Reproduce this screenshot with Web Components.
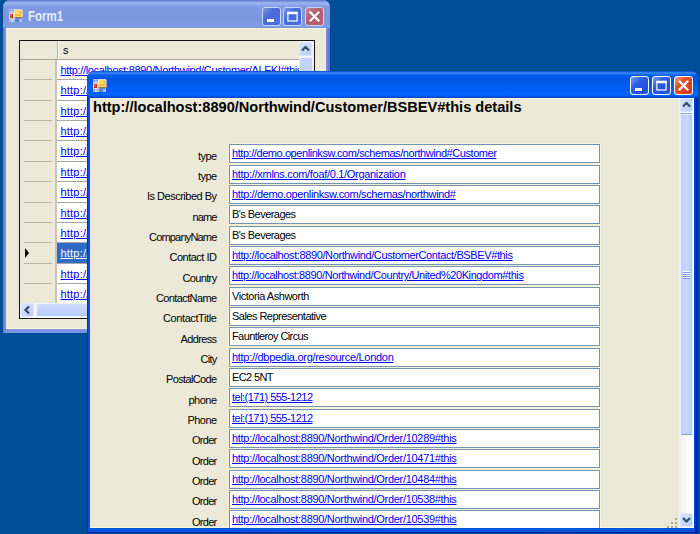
<!DOCTYPE html>
<html lang="en"><head><meta charset="utf-8"><title>Form1</title>
<style>
html,body{margin:0;width:700px;height:534px;overflow:hidden;background:#004e98}
body{font:11px "Liberation Sans",Arial,sans-serif;color:#000}
</style></head><body>
<x-desktop></x-desktop>
<script>
const define=(name,html,setup)=>customElements.define(name,class extends HTMLElement{
  connectedCallback(){
    if(this.shadowRoot)return;
    const t=document.createElement('template');
    t.innerHTML=typeof html==='function'?html(this):html;
    this.attachShadow({mode:'open'}).append(t.content.cloneNode(true));
    if(setup)setup(this,this.shadowRoot);
  }
});

/* Text run fitted to a given width, by tracking or (with the stretch attribute) by horizontal scale. */
define('fit-text',`<style>:host{display:inline-block;white-space:pre;line-height:13px}span{display:inline-block;text-decoration:inherit;transform-origin:0 50%}</style><span></span>`,(el,root)=>{
  const s=root.querySelector('span'),txt=el.getAttribute('text'),w=+el.getAttribute('w');
  s.textContent=txt;
  if(!w)return;
  const n=s.getBoundingClientRect().width;
  if(el.hasAttribute('stretch'))s.style.transform=`scaleX(${w/n})`;
  else s.style.letterSpacing=((w-n)/txt.length)+'px';
});

define('app-icon',`<style>:host{display:block;width:14px;height:14px}svg{display:block}</style>
<svg width="14" height="14" viewBox="0 0 14 14"><rect x=".5" y=".5" width="12" height="12" fill="#5b87d2" stroke="#a9bbdc"/>
<path d="M1 3h4M3 1v12M1 11h12M6 9v4" stroke="#dfe8f7"/><rect x=".5" y="4.500" width="4" height="5" fill="#cf2716" stroke="#f6cfbd"/><rect x="1.500" y="5.500" width="1.500" height="2" fill="#f27757"/>
<rect x="5.500" y="1" width="7.500" height="7" fill="#f5bd2b" stroke="#fff1c5"/><rect x="6.500" y="2" width="4" height="3" fill="#ffdf73"/><path d="M5.500 8.500h8" stroke="#9a7431"/><rect x="6" y="10" width="4" height="3" fill="#5481cf"/><rect x="10.500" y="10" width="2.500" height="3" fill="#a8c2ee"/></svg>`);

define('caption-button',el=>{
  const k=el.getAttribute('kind');
  const g={min:'<path d="M5 13.500h7" stroke="#fff" stroke-width="2.800"/>',
    max:'<rect x="4.900" y="5.500" width="9.200" height="8.500" fill="none" stroke="#fff" stroke-width="1.200"/><path d="M4.300 6h10.400" stroke="#fff" stroke-width="2.600"/>',
    close:'<path d="M4.800 4.800l9.400 9.400M14.200 4.800l-9.400 9.400" stroke="#fff" stroke-width="2.300"/>'}[k];
  return `<style>:host{display:block;box-sizing:border-box;width:19px;height:19px;border:1px solid var(--btn-edge);border-radius:3px;
  background:${k==='close'?'var(--close-bg)':'var(--btn-bg)'}}svg{display:block;margin:-1px}</style><svg width="19" height="19" viewBox="0 0 19 19">${g}</svg>`;
});

define('xp-window',`<style>
:host{position:absolute;box-sizing:border-box;display:flex;flex-direction:column;border-radius:7px 7px 0 0;overflow:hidden;background:var(--frame);padding:0 4px 4px 3px;
 --btn-edge:#fff;--btn-bg:linear-gradient(135deg,#7ba3f5,#2b5fe6 35%,#1d50df 75%,#2a66f0);--close-bg:linear-gradient(135deg,#f0a083,#e2512c 35%,#d9401a 75%,#c93713)}
header{display:flex;align-items:center;box-sizing:border-box;flex:none;margin:0 -4px 0 -3px;background:var(--title);height:var(--th);padding:var(--tp);color:var(--tc)}
.name{flex:1;font:bold 15px "Liberation Sans",sans-serif;padding-left:5px;margin-top:-1px}
nav{display:flex;gap:2.700px}
main{flex:1;min-height:0;background:#ece9d8;display:flex;overflow:hidden;box-shadow:inset 0 1px #fbf6d8,inset 0 -1px #fbf6d8}
</style><header><app-icon></app-icon><div class="name"><slot name="title"></slot></div><nav><caption-button kind="min"></caption-button><caption-button kind="max"></caption-button><caption-button kind="close"></caption-button></nav></header><main><slot></slot></main>`);

const chevrons={up:'M3.500 8.500L7 5l3.500 3.500',down:'M3.500 5L7 8.500 10.500 5',left:'M8.500 3.500L5 7l3.500 3.500'};
define('scroll-arrow',el=>`<style>:host{display:block;flex:none;box-sizing:border-box;width:13px;height:14px;border:1px solid #dce6fd;border-radius:2px;background:linear-gradient(135deg,#d7e3ff,#b9cefb)}svg{display:block;margin:-1px}</style>
<svg width="13" height="14" viewBox="0.500 0 13 14"><path d="${chevrons[el.getAttribute('dir')]}" fill="none" stroke="#33486f" stroke-width="2.200"/></svg>`);

define('detail-row',el=>{
  const link=el.hasAttribute('link');
  return `<style>:host{display:grid;grid-template-columns:126.500px 371px;column-gap:12.500px;height:20.340px;flex:none}
  .label{text-align:right;padding-top:5.500px}
  .field{box-sizing:border-box;height:19px;border:1px solid #7094b2;background:#fff;padding:2px 0 0 2px;box-shadow:0 0 0 1px #f6f0d4;${link?'color:#00f;text-decoration:underline':''}}
  .field fit-text{text-decoration:inherit}</style>
  <div class="label"><fit-text text="${el.getAttribute('label')}" w="${el.getAttribute('lw')}"></fit-text></div>
  <div class="field"><fit-text text="${el.getAttribute('value')}" w="${el.getAttribute('vw')}"></fit-text></div>`;
});

const L='http://localhost:8890/Northwind/';
const rows=[
['type',18.5,'http://demo.openlinksw.com/schemas/northwind#Customer',264.5,1],
['type',18.5,'http://xmlns.com/foaf/0.1/Organization',173.5,1],
['Is Described By',69.5,'http://demo.openlinksw.com/schemas/northwind#',223.5,1],
['name',24,"B's Beverages",63.5,0],
['CompanyName',67.5,"B's Beverages",63.5,0],
['Contact ID',47,L+'CustomerContact/BSBEV#this',280.5,1],
['Country',34,L+'Country/United%20Kingdom#this',291.5,1],
['ContactName',60.5,'Victoria Ashworth',77,0],
['ContactTitle',53.5,'Sales Representative',94,0],
['Address',36,'Fauntleroy Circus',76,0],
['City',16,'http://dbpedia.org/resource/London',161.5,1],
['PostalCode',50.5,'EC2 5NT',41,0],
['phone',28,'tel:(171) 555-1212',80.5,1],
['Phone',29,'tel:(171) 555-1212',80.5,1],
...['10289','10471','10484','10538','10539'].map(n=>['Order',24.5,L+'Order/'+n+'#this',224.5,1])];

define('details-form',`<style>
:host{display:flex;width:100%;height:100%}
.content{flex:1;min-width:0;overflow:hidden;display:flex;flex-direction:column;position:relative}
h1{margin:0;font:bold 14px/18px "Liberation Sans",sans-serif;height:46.300px;padding-left:2.500px;flex:none}
.grip{position:absolute;right:1px;bottom:0}
.bar{width:15px;flex:none;box-sizing:border-box;padding:0 1px 1px;display:flex;flex-direction:column;background:linear-gradient(90deg,#f0efe9,#fff 70%)}
.thumb{height:321px;box-sizing:border-box;border:1px solid #e8effe;border-bottom-color:#839edb;border-radius:2px;background:linear-gradient(90deg,#c1d1fb,#c8d6fb 60%,#b4c8f6);margin-top:2px;box-shadow:0 -1px #87a5dc;display:grid;place-items:center}
.thumb i{width:7px;height:8px;background:repeating-linear-gradient(#fff 0 1px,#7d9cf0 1px 2px)}
.sp{flex:1}
</style><div class="content"><h1><fit-text stretch text="${L}Customer/BSBEV#this details" w="428.5"></fit-text></h1>
${rows.map(r=>`<detail-row label="${r[0]}" lw="${r[1]}" value="${r[2]}" vw="${r[3]}" ${r[4]?'link':''}></detail-row>`).join('')}
<svg class="grip" width="11" height="11" viewBox="0 0 11 11" fill="#aaa693"><path d="M8 1h2v2H8zM4 5h2v2H4zM8 5h2v2H8zM0 9h2v2H0zM4 9h2v2H4zM8 9h2v2H8z"/></svg></div>
<div class="bar"><scroll-arrow dir="up"></scroll-arrow><div class="thumb"><i></i></div><div class="sp"></div><scroll-arrow dir="down"></scroll-arrow></div>`);

define('data-grid',`<style>
:host{display:flex;flex-direction:column;box-sizing:border-box;width:296px;height:279px;margin:12px 0 0 13px;border:1px solid #111;background:#fff;overflow:hidden;flex:none}
.top{display:flex;height:262px;flex:none}.table{flex:1;min-width:0;overflow:hidden}
.row,.head{display:grid;grid-template-columns:37px 1fr;height:20.360px;box-sizing:border-box}
.head{height:19px;background:#ece9d8;border-bottom:1px solid #aca899}
.head .c{border-left:1px solid #b5b1a2;padding:3px 0 0 5px;box-shadow:inset 1px 0 #fff}
.h{background:#ece9d8;display:grid;grid-template-columns:14px 1fr;align-items:center;box-sizing:border-box;border-right:2px solid #c8c4b6;padding-left:4px;position:relative}
.h hr{position:absolute;left:4px;right:3px;bottom:0;margin:0;border:0;height:1px;background:#b8b6a4;box-shadow:0 1px #fff}
.c{color:#00f;text-decoration:underline;padding:4px 0 0 3.500px;overflow:hidden;white-space:nowrap}
.c fit-text{text-decoration:inherit}
.row .c{border-bottom:1px solid #a9a89f}
.head .c{color:#000;text-decoration:none}.sel .c{background:#316ac5;color:#fff}
.v{width:14px;background:#f5f4ef;padding:1px 1px 0 0}.v div{height:230px;margin-top:1px;border:1px solid #e8effe;background:#c4d3fb}
.hb{height:14px;display:flex;padding:0 0 0 1px;background:#f5f4ef;gap:2px}.hb div{width:190px;height:12px;border:1px solid #edf3ff;background:linear-gradient(#d0dcfe,#b7cafa)}
</style><div class="top"><div class="table"><div class="head"><div></div><div class="c">s</div></div>
${Array.from({length:12},(_,i)=>`<div class="row ${i===9?'sel':''}"><div class="h">${i===9?'<svg width="6" height="10"><path d="M1 0l4 5-4 5z"/></svg>':''}<hr></div><div class="c">${i?'<fit-text text="http://" w="29"></fit-text>':`<fit-text text="${L}Customer/ALFKI#this" w="241.5"></fit-text>`}</div></div>`).join('')}
</div><div class="v"><scroll-arrow dir="up"></scroll-arrow><div></div></div></div>
<div class="hb"><scroll-arrow dir="left"></scroll-arrow><div></div></div>`);

define('x-desktop',`<style>
:host{display:block;position:relative;width:700px;height:534px;overflow:hidden;background:#004e98}
.back{left:3px;top:0;width:327px;height:333px;--frame:linear-gradient(90deg,#6974d6,#7b94e2 3px,#7b94e2 323px,#6569d0);--th:28px;--tp:4px 6px 0 6px;--tc:#e4ebfb;
--title:linear-gradient(#5d75cc,#9db7f2 3px,#7d9ae2 7px,#7b97e0 20px,#829fe6 27px,#7088d5)}
.front{left:87px;top:71px;width:611px;height:461px;border-bottom:1px solid #001ea0;--frame:linear-gradient(90deg,#0019cf,#0b5cf2 2px,#0055e5 3px,#0855dd 607px,#0831d9 608px,#001ea0 611px);--th:27px;--tp:2px 5.500px 0 6px;
--title:linear-gradient(#0048c8,#3c8cfb 2px,#0560ee 4px,#0054e3 9px,#0061fb 20px,#0268ff 24px,#003fc4)}
.front{height:462px}
</style>
<xp-window class="back" style="--btn-edge:#c9d5f6;--btn-bg:linear-gradient(135deg,#7d96e2,#4869d7 40%,#4c70df);--close-bg:linear-gradient(135deg,#c58a9b,#b4606e 40%,#b15f70)"><fit-text slot="title" stretch text="Form1" w="35"></fit-text><data-grid></data-grid></xp-window>
<xp-window class="front"><details-form></details-form></xp-window>`);
</script></body></html>
